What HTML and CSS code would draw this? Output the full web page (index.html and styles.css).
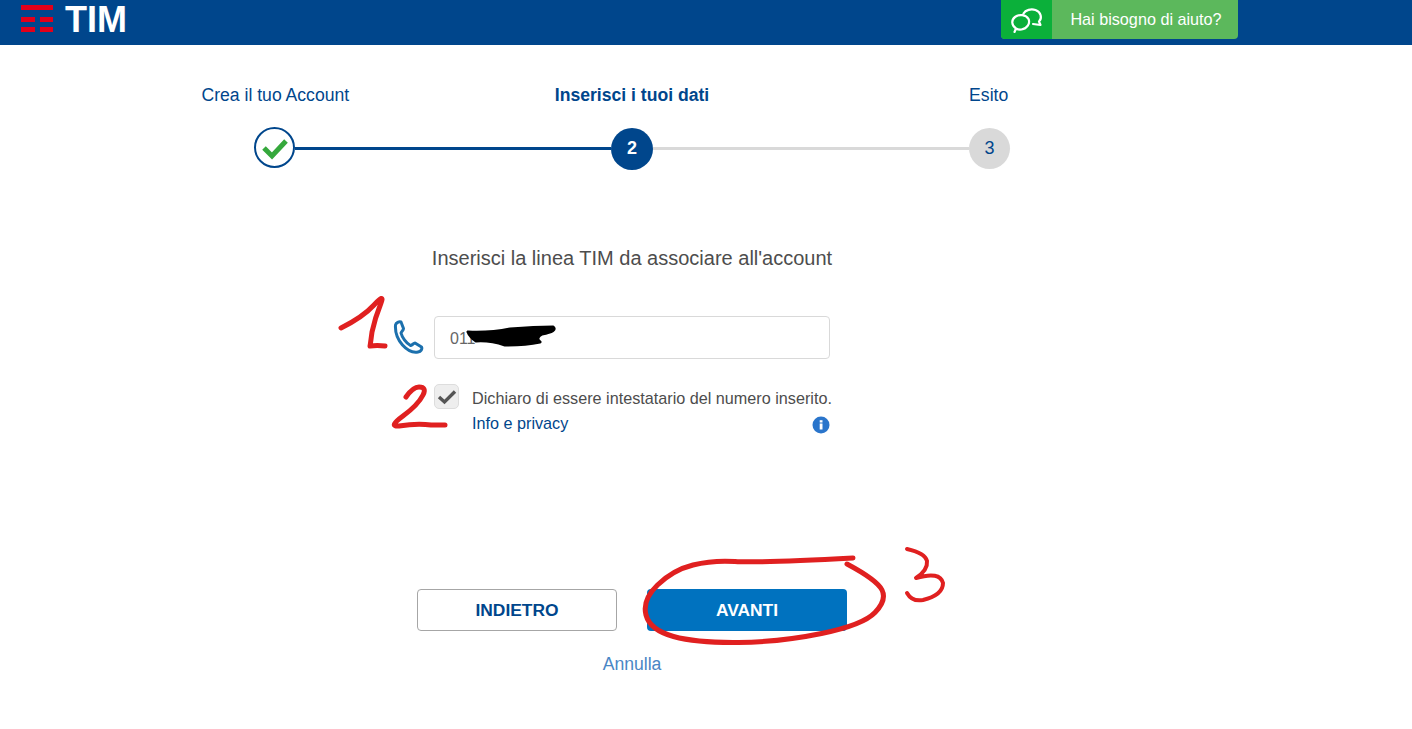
FILE: index.html
```html
<!DOCTYPE html>
<html lang="en">
<head>
  <meta charset="utf-8">
  <title>TIM - Inserisci i tuoi dati</title>
  <link rel="stylesheet" href="styles.css">
</head>
<body>

  <header class="topbar">
    <div class="logo">
      <svg class="logo-mark" width="33" height="28" viewBox="0 0 33 28">
        <rect x="0" y="0" width="32" height="5" fill="#e2001a"/>
        <rect x="0" y="12" width="14" height="5" fill="#e2001a"/>
        <rect x="19" y="12" width="13" height="5" fill="#e2001a"/>
        <rect x="0" y="22" width="14" height="5" fill="#e2001a"/>
        <rect x="19" y="22" width="13" height="5" fill="#e2001a"/>
      </svg>
      <span class="logo-text">TIM</span>
    </div>
    <a class="help" href="#">
      <span class="help-icon">
        <svg width="34" height="26" viewBox="0 0 34 26" fill="none" stroke="#fff" stroke-width="2.200" stroke-linecap="round" stroke-linejoin="round">
          <path d="M4.500 25 L6 21.500 C1.500 18.500 1 13 5 10 C9 7 16 7.500 18.500 12 C20.500 16.500 17 21.500 11.500 22.500 C9.500 22.800 7.500 22.500 6 21.500"/>
          <path d="M13.500 6.500 C15.500 3 21 1.500 25.500 3 C31 5 32.500 11 29 14.500 L30.500 18 L23 17"/>
        </svg>
      </span>
      <span class="help-label">Hai bisogno di aiuto?</span>
    </a>
  </header>

  <main class="page">

    <!-- Stepper -->
    <section class="steps">
      <ol class="step-labels">
        <li>Crea il tuo Account</li>
        <li class="current">Inserisci i tuoi dati</li>
        <li>Esito</li>
      </ol>
      <div class="step-track">
        <span class="dot dot-done">
          <svg width="28" height="24" viewBox="0 0 28 24"><path d="M3 12 L11 20 L25 5" fill="none" stroke="#35a83c" stroke-width="5"/></svg>
        </span>
        <span class="bar bar-done"></span>
        <span class="dot dot-current">2</span>
        <span class="bar"></span>
        <span class="dot dot-todo">3</span>
      </div>
    </section>

    <!-- Form -->
    <section class="line-form">
      <h2>Inserisci la linea TIM da associare all'account</h2>
      <div class="form-grid">
        <svg class="phone" width="32" height="34" viewBox="0 0 32 34" fill="none" stroke="#1c70ad" stroke-width="3" stroke-linejoin="round">
          <path d="M2.500 5 C3 2.500 6 1.500 8 2 L10.500 8.500 C10.500 10.500 8.500 11 8 13 C9 17 13 23 17.500 25.500 C19 25.500 20.500 23 22 23 L28.500 27 C29.500 29 28 31.500 25 32 C20 33 14 30 9.500 25 C5 20 2 12 2.500 5 Z"/>
        </svg>
        <input class="phone-input" type="text" value="011" aria-label="Linea TIM">
        <span class="check" aria-hidden="true">
          <svg width="20" height="16" viewBox="0 0 20 16"><path d="M2 8 L7.500 13 L18 2.500" fill="none" stroke="#555" stroke-width="3.400"/></svg>
        </span>
        <div class="check-text">
          <p>Dichiaro di essere intestatario del numero inserito.</p>
          <div class="privacy">
            <a href="#">Info e privacy</a>
            <svg width="18" height="18" viewBox="0 0 18 18">
              <circle cx="9" cy="9" r="8.500" fill="#2a75cb"/>
              <rect x="7.700" y="7.500" width="2.800" height="6" fill="#fff"/>
              <rect x="7.700" y="4.200" width="2.800" height="2.300" fill="#fff"/>
            </svg>
          </div>
        </div>
      </div>
    </section>

    <!-- Actions -->
    <section class="actions">
      <div class="buttons">
        <button class="btn btn-back" type="button">INDIETRO</button>
        <button class="btn btn-next" type="button">AVANTI</button>
      </div>
      <a class="cancel" href="#">Annulla</a>
    </section>

  </main>

  <!-- Hand drawn marks on top of the page -->
  <svg class="marks" width="1412" height="729" viewBox="0 0 1412 729" fill="none" stroke-linecap="round" stroke-linejoin="round">
    <path class="blot" d="M468 332 Q490 333 510 329 Q535 327 553 327 Q558 331 542 334 Q535 338 540 342 Q525 345 505 345 Q490 340 476 341 Q470 337 468 332 Z"/>
    <path class="ink" d="M341 328 Q363 317 374 305 Q385 293 381 303 Q375 318 372 332 Q370 347 370 346 Q377 345 385 346"/>
    <path class="ink" d="M406 397 Q413 387 419 387 Q427 387 423 395 Q418 405 403 416 Q388 427 399 426 Q417 423 431 425 L445 425"/>
    <path class="ink" d="M853 558 Q757 563 735 561.500 Q713 560 693 565 Q673 570 657.500 585 Q642 600 646 615 Q650 630 673.500 636.500 Q697 643 738.500 642.500 Q780 642 821.500 633.500 Q863 625 875 612.500 Q887 600 882 590 Q877 580 847 564"/>
    <path class="ink thin" d="M907 549 Q925 553 927 561 Q928 570 916 578 Q940 571 943 583 Q943 595 923 600 Q912 602 907 593"/>
  </svg>

</body>
</html>
```

FILE: styles.css
```css
body { margin: 0; background: #fff; font-family: "Liberation Sans", Arial, sans-serif; color: #4d4d4d; position: relative; height: 729px; overflow: hidden; }

/* top bar */
.topbar { height: 45px; background: #00468c; display: flex; align-items: flex-start; justify-content: space-between; padding: 0 174px 0 21px; }
.logo { display: flex; align-items: flex-start; gap: 11px; }
.logo-mark { margin-top: 5px; }
.logo-text { color: #fff; font-weight: bold; font-size: 36px; line-height: 38px; padding-top: 1px; }
.help { display: flex; width: 237px; height: 39px; background: #5cb85c; border-radius: 0 0 4px 4px; color: #fff; text-decoration: none; overflow: hidden; }
.help-icon { width: 51px; background: #0bb03a; display: flex; align-items: center; justify-content: center; }
.help-label { flex: 1; padding-left: 2px; font-size: 16.200px; line-height: 39px; text-align: center; }

.page { width: 1070px; margin-left: 97px; }

/* stepper */
.steps { padding-top: 39px; }
.step-labels { list-style: none; margin: 0; padding: 0; display: grid; grid-template-columns: repeat(3, 1fr); color: #00468c; font-size: 17.600px; line-height: 22px; text-align: center; }
.step-labels .current { font-weight: bold; }
.step-track { display: flex; align-items: center; margin: 21px 157px 0; }
.dot { flex: none; width: 41px; height: 41px; border-radius: 50%; display: flex; align-items: center; justify-content: center; box-sizing: border-box; font-size: 18px; }
.dot-done { border: 2px solid #00468c; background: #fff; margin-bottom: 2px; }
.dot-current { width: 42px; height: 42px; background: #00468c; color: #fff; font-weight: bold; }
.dot-todo { background: #d9d9d9; color: #00468c; }
.bar { flex: 1; height: 3px; background: #d9d9d9; }
.bar-done { background: #00468c; }

/* form */
.line-form h2 { margin: 76px 0 0; font-size: 20px; font-weight: normal; line-height: 24px; text-align: center; color: #4d4d4d; }
.form-grid { display: grid; grid-template-columns: 396px; margin: 46px 0 0 337px; width: 396px; row-gap: 29px; position: relative; }
.phone { position: absolute; left: -41px; top: 4px; }
.phone-input { width: 100%; height: 43px; box-sizing: border-box; border: 1px solid #d9d9d9; border-radius: 4px; padding: 2px 15px 0; font: 16px "Liberation Sans", Arial, sans-serif; color: #666; }
.check { position: absolute; left: 0; top: 68px; width: 25px; height: 25px; box-sizing: border-box; background: #eee; border: 1px solid #ddd; border-radius: 5px; display: flex; align-items: center; justify-content: center; }
.check-text { padding-left: 38px; font-size: 16.200px; }
.check-text p { margin: 0; line-height: 20px; white-space: nowrap; }
.privacy { display: flex; justify-content: space-between; align-items: flex-start; margin-top: 4px; line-height: 22px; }
.privacy a { color: #00468c; text-decoration: none; }
.privacy svg { margin-top: 4px; }

/* buttons */
.actions { margin-top: 155px; display: flex; flex-direction: column; align-items: center; }
.buttons { display: flex; gap: 30px; }
.btn { width: 200px; height: 42px; border-radius: 4px; font: bold 17.400px "Liberation Sans", Arial, sans-serif; cursor: pointer; }
.btn-back { background: #fff; border: 1px solid #a6a6a6; color: #00468c; }
.btn-next { background: #0072bf; border: none; color: #fff; }
.cancel { margin-top: 22px; color: #4a86c5; font-size: 17.600px; line-height: 22px; text-decoration: none; }

/* hand drawn marks */
.marks { position: absolute; left: 0; top: 0; pointer-events: none; }
.ink { stroke: #e02020; stroke-width: 5; }
.ink.thin { stroke-width: 4; }
.blot { fill: #000; stroke: #000; stroke-width: 3; }
```
